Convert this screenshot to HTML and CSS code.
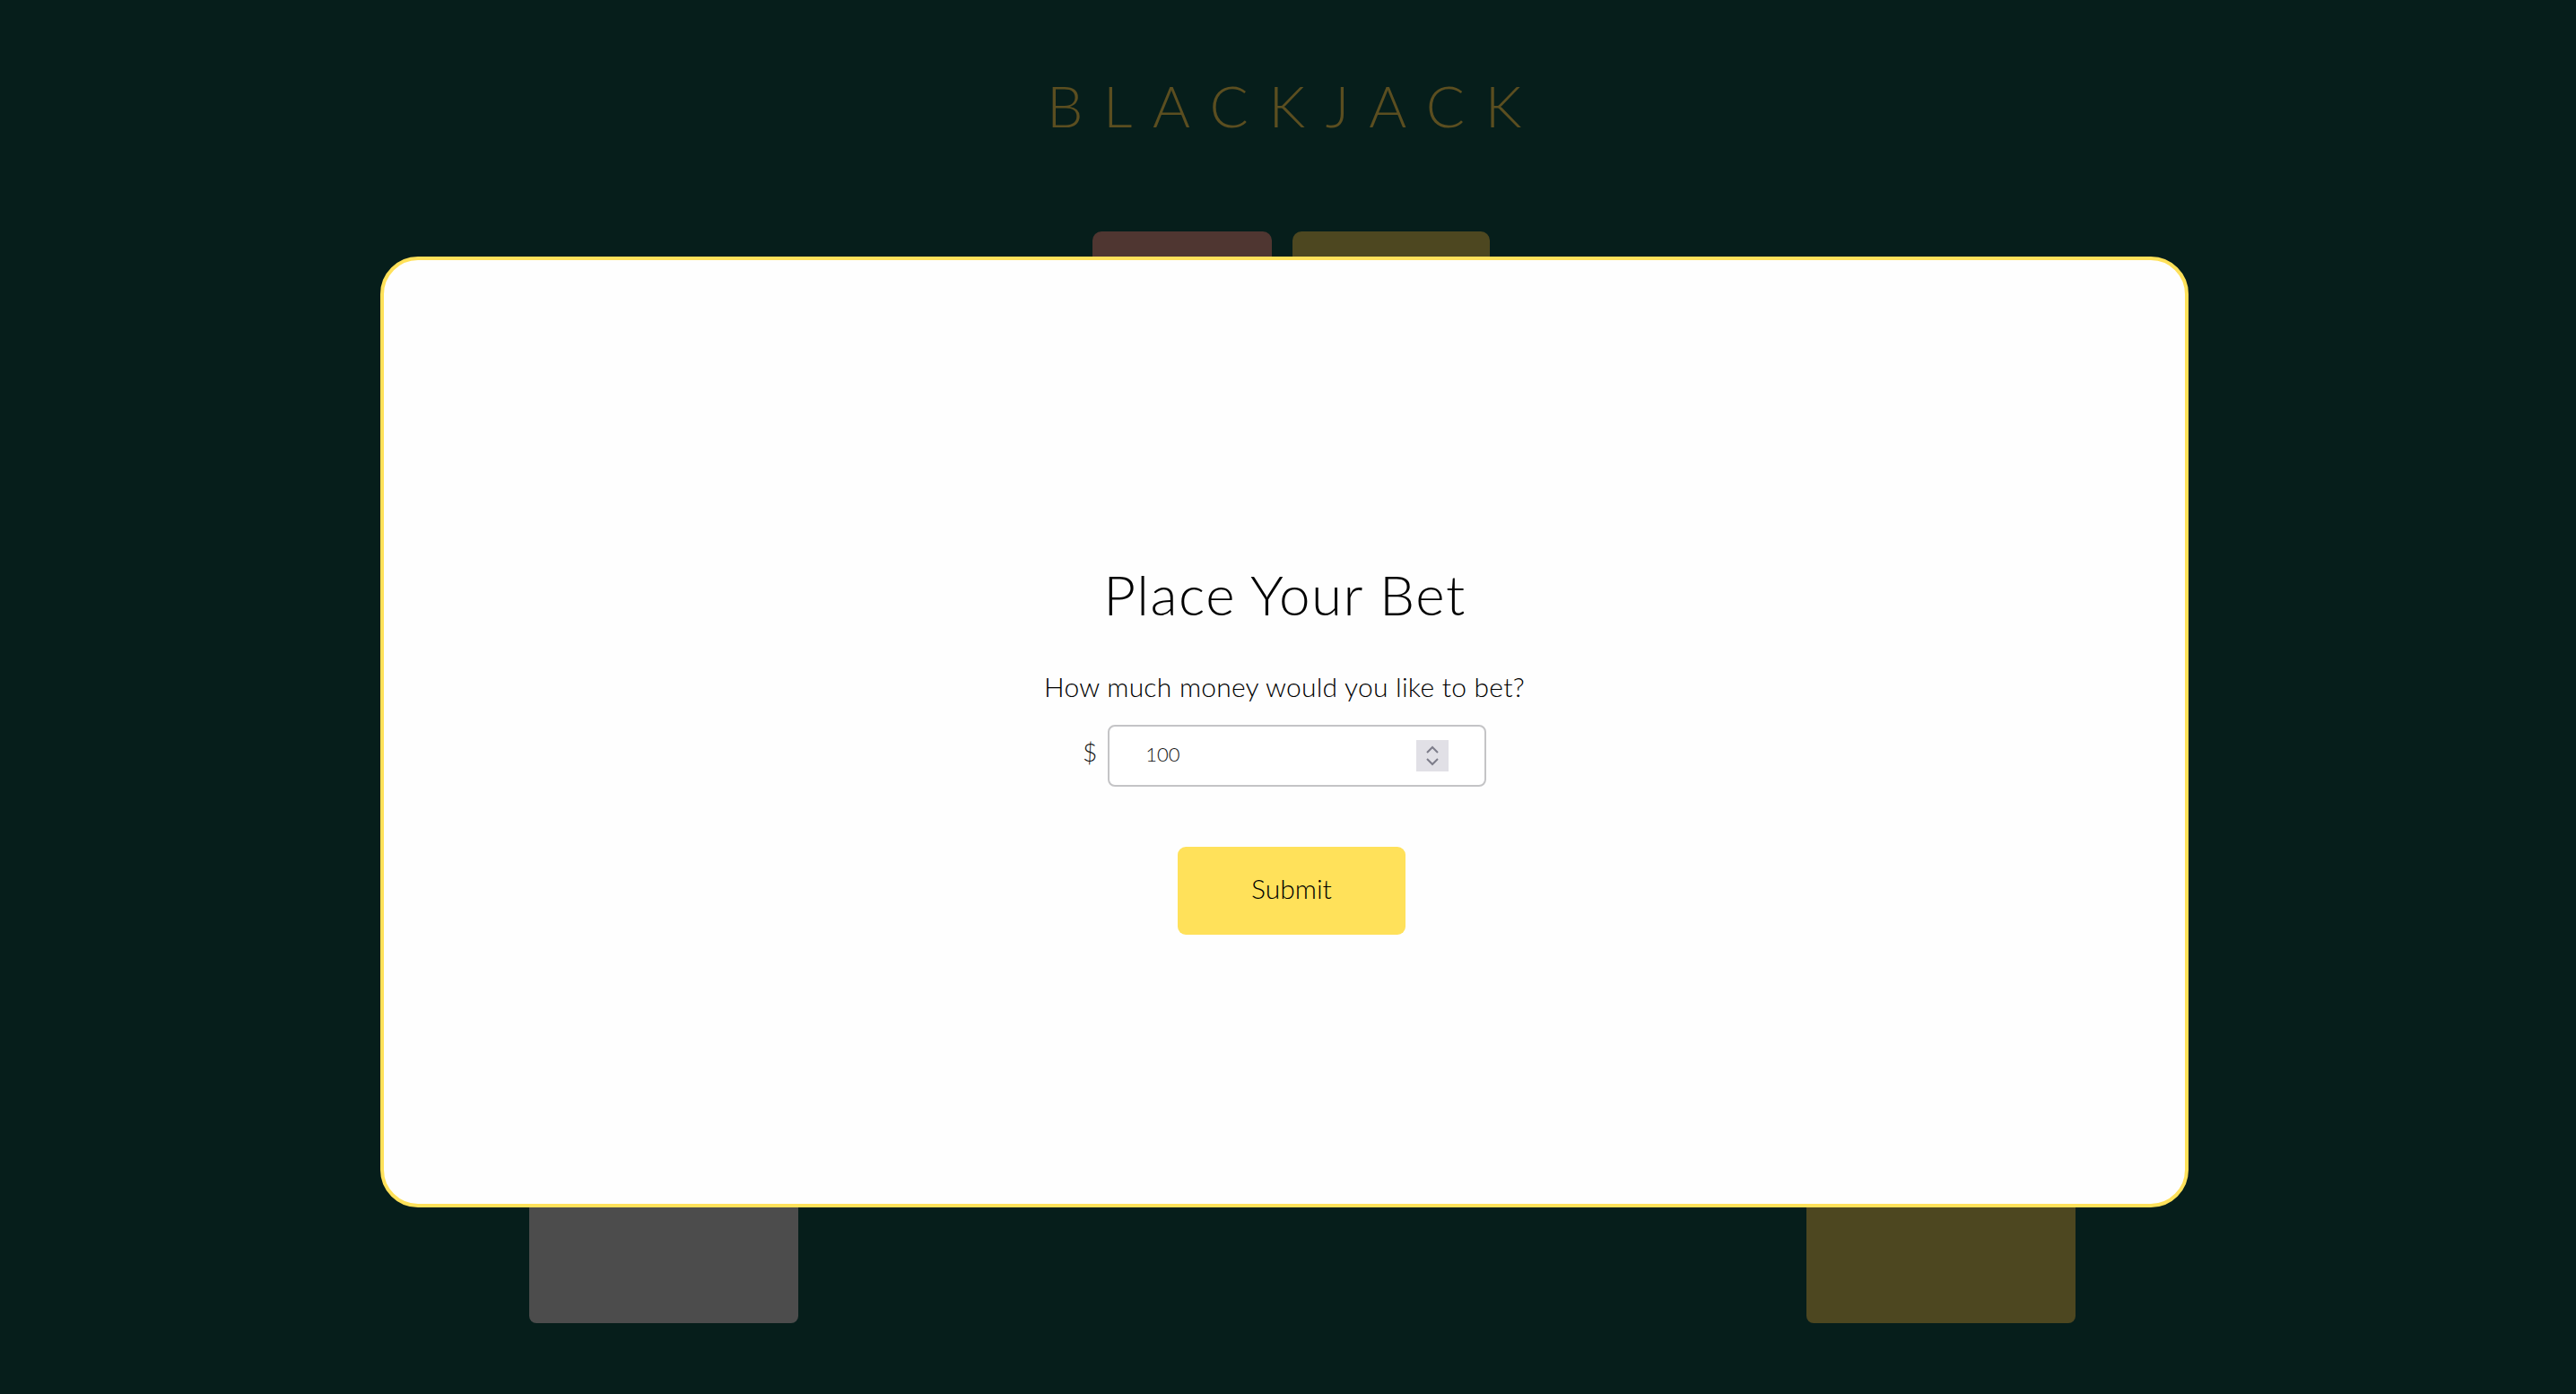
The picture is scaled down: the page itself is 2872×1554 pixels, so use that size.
FILE: index.html
```html
<!DOCTYPE html>
<html lang="en">
<head>
<meta charset="utf-8">
<title>Blackjack</title>
<link rel="stylesheet" href="styles.css">
</head>
<body>
<div class="page">
  <h1 class="title">BLACKJACK</h1>
  <div class="actions">
    <button class="act act-brown" type="button"></button>
    <button class="act act-olive" type="button"></button>
  </div>
  <div class="table">
    <div class="slot slot-grey"></div>
    <div class="slot slot-olive"></div>
  </div>
</div>
<div class="modal">
  <h2 class="modal-title">Place Your Bet</h2>
  <p class="modal-text">How much money would you like to bet?</p>
  <div class="bet-row">
    <span class="dollar">$</span>
    <div class="bet-input">
      <span class="bet-value">100</span>
      <span class="spin">
        <svg width="36" height="35" viewBox="0 0 36 35"><path d="M12 14 L18 8 L24 14" fill="none" stroke="#7d7d8a" stroke-width="2"/><path d="M12 21 L18 27 L24 21" fill="none" stroke="#7d7d8a" stroke-width="2"/></svg>
      </span>
    </div>
  </div>
  <button class="submit" type="button">Submit</button>
</div>
</body>
</html>
```

FILE: styles.css
```css
html, body {
  margin: 0;
  padding: 0;
  background: #061e1b;
  font-family: "Lato", "Open Sans", sans-serif;
  font-weight: 300;
}

.page {
  display: flex;
  flex-direction: column;
  align-items: center;
  height: 1554px;
  overflow: hidden;
}

.title {
  margin: 82px 0 0 0;
  font-size: 64px;
  font-weight: 300;
  line-height: 72px;
  letter-spacing: 22.6px;
  padding-left: 14px;
  color: #5b4e20;
}

.actions {
  display: flex;
  gap: 23px;
  margin-top: 104px;
  margin-left: 7px;
}

.act {
  border: none;
  border-radius: 10px;
  height: 80px;
  padding: 0;
}

.act-brown { width: 200px; background: #4f3631; }
.act-olive { width: 220px; background: #4d4720; }

.table {
  width: 100%;
  display: flex;
  justify-content: space-between;
  padding: 0 558px 0 590px;
  box-sizing: border-box;
  margin-top: 937px;
}

.slot {
  width: 300px;
  height: 200px;
  border-radius: 8px;
}

.slot-grey { background: #4c4c4c; }
.slot-olive { background: #4d4720; }

.modal {
  position: fixed;
  left: 424px;
  top: 286px;
  width: 2016px;
  height: 1060px;
  box-sizing: border-box;
  background: #fefefe;
  border: 4px solid #ffe15a;
  border-radius: 42px;
  display: flex;
  flex-direction: column;
  align-items: center;
  padding-top: 336px;
}

.modal-title {
  margin: 0;
  font-size: 62px;
  font-weight: 300;
  line-height: 72px;
  color: #000;
  letter-spacing: 1.5px;
  padding-left: 1px;
}

.modal-text {
  margin: 49px 0 0 0;
  font-size: 30px;
  line-height: 36px;
  letter-spacing: 0.25px;
  color: #000;
}

.bet-row {
  display: flex;
  align-items: center;
  gap: 12px;
  margin-top: 25px;
  margin-right: 0;
}

.dollar {
  font-size: 28px;
  color: #111;
  padding-bottom: 10px;
}

.bet-input {
  width: 422px;
  height: 69px;
  box-sizing: border-box;
  border: 2px solid #c4c4c6;
  border-radius: 8px;
  display: flex;
  align-items: center;
  padding: 0 40px 4px 40px;
  background: #fff;
}

.bet-value {
  flex: 1;
  font-size: 22px;
  color: #111;
}

.spin {
  width: 36px;
  height: 35px;
  background: #e1e0e6;
  display: flex;
  margin-top: 4px;
}

.submit {
  margin-top: 67px;
  margin-left: 16px;
  width: 254px;
  height: 98px;
  border: none;
  border-radius: 9px;
  background: #ffe15a;
  font-family: "Lato", "Open Sans", sans-serif;
  font-weight: 300;
  font-size: 30px;
  color: #000;
  padding: 0 0 6px 0;
}
```
